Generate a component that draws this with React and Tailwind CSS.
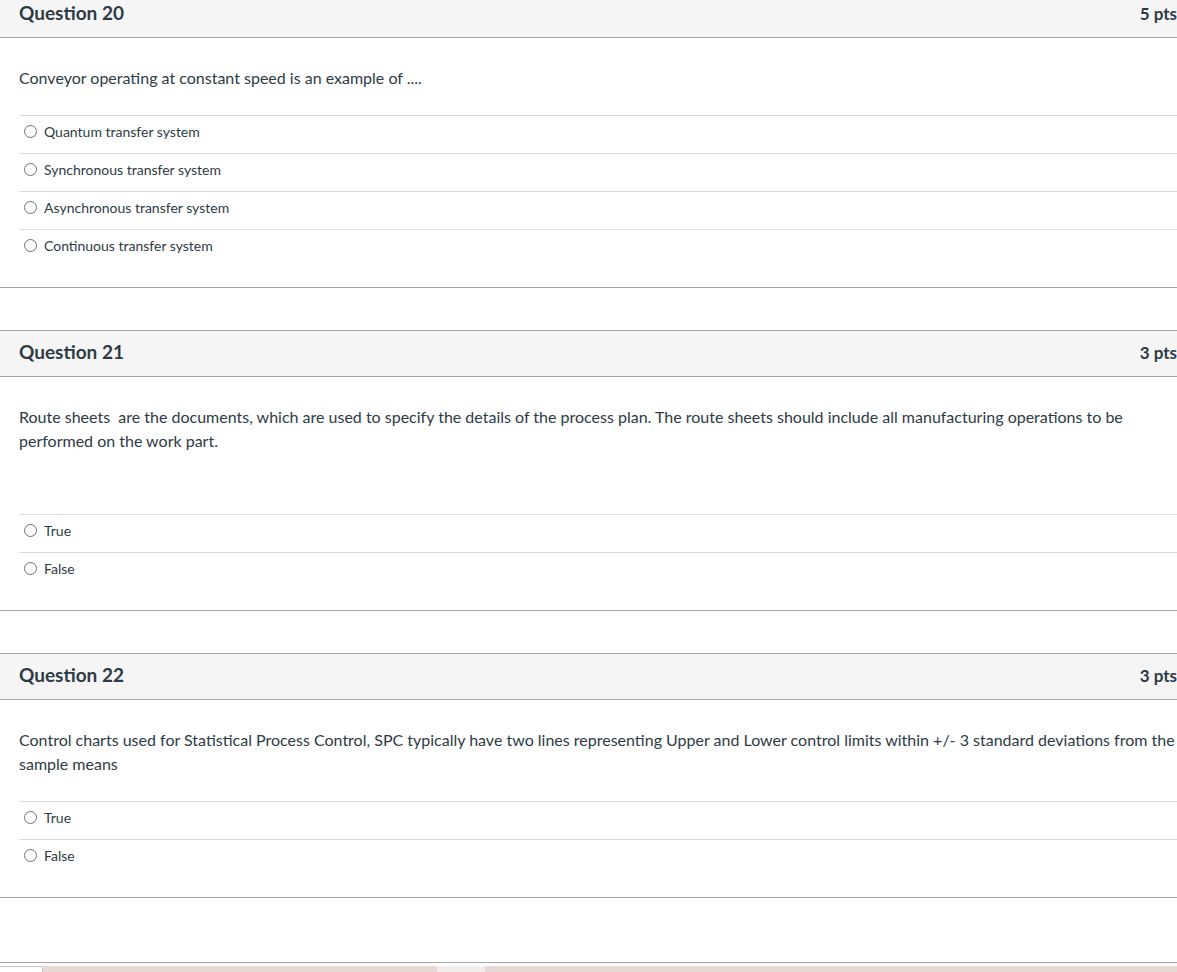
import React from 'react';

const questions = [
    {
        title: 'Question 20',
        pts: '5 pts',
        text: ['Conveyor operating at constant speed is an example of ....'],
        extra: false,
        answers: ['Quantum transfer system', 'Synchronous transfer system', 'Asynchronous transfer system', 'Continuous transfer system']
    },
    {
        title: 'Question 21',
        pts: '3 pts',
        text: ['Route sheets  are the documents, which are used to specify the details of the process plan. The route sheets should include all manufacturing operations to be performed on the work part.'],
        extra: true,
        answers: ['True', 'False']
    },
    {
        title: 'Question 22',
        pts: '3 pts',
        text: ['Control charts used for Statistical Process Control, SPC typically have two lines representing Upper and Lower control limits within +/- 3 standard deviations from the sample means'],
        extra: false,
        answers: ['True', 'False']
    }
];

const Radio = () => (
    <span className="w-[13px] h-[13px] rounded-full border border-[#6f6f6f] bg-white shrink-0" />
);

const Question = ({ q }) => (
    <div className="w-[1180px] border-y border-[#a5a5a5] bg-white">
        {/* Header */}
        <div className="h-[46px] bg-[#f5f5f5] border-b border-[#a5a5a5] flex items-center justify-between pl-[19px] pr-[3px] pb-[2px]">
            <span className="text-[19px] font-bold text-[#2d3b45]">{q.title}</span>
            <span className="text-[17px] font-bold text-[#2d3b45]">{q.pts}</span>
        </div>

        {/* Question body */}
        <div className="pl-[19px] pr-[3px] pt-[28px] pb-[20px]">
            <div className="text-[16px] leading-[24px] text-[#2d3b45]">
                {q.text.map((t, i) => (
                    <p key={i} className="whitespace-pre-wrap">{t}</p>
                ))}
            </div>
            {q.extra && <div className="h-[36px]" />}
            <div className="mt-[25px]">
                {q.answers.map((a) => (
                    <div key={a} className="h-[38px] border-t border-[#dcdcdc] flex items-center gap-[7px] pl-[5px] pb-[6px]">
                        <Radio />
                        <span className="text-[14px] text-[#2d3b45]">{a}</span>
                    </div>
                ))}
            </div>
        </div>
    </div>
);

export default function App() {
    return (
        <div className="w-[1177px] h-[972px] overflow-hidden bg-white font-['Lato','Liberation_Sans',sans-serif]">
            <div className="-mt-[9px] flex flex-col gap-[42px]">
                {questions.map((q) => (
                    <Question key={q.title} q={q} />
                ))}
            </div>

            {/* bottom strip */}
            <div className="mt-[64px] border-t border-[#a5a5a5]" />
            <div className="mt-[3px] flex h-[10px]">
                <div className="w-[43px] border-t border-r border-[#c8c8c8] bg-white" />
                <div className="w-[394px] bg-[#e7d9d6]" />
                <div className="w-[48px] bg-[#f3eeec]" />
                <div className="flex-1 bg-[#e7d9d6]" />
            </div>
        </div>
    );
}
